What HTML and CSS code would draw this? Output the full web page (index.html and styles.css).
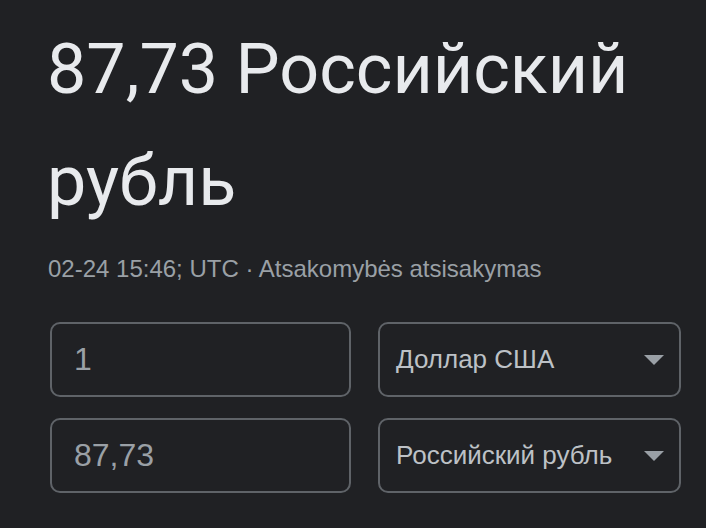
FILE: index.html
```html
<!DOCTYPE html>
<html lang="ru">
<head>
<meta charset="utf-8">
<link rel="stylesheet" href="styles.css">
</head>
<body>
<div class="panel">
  <div class="result">87,73 Российский рубль</div>
  <div class="meta">02-24 15:46; UTC · <span class="link">Atsakomybės atsisakymas</span></div>
  <div class="grid">
    <div class="field"><span class="val">1</span></div>
    <div class="select"><span class="cur">Доллар США</span><span class="arrow"></span></div>
    <div class="field"><span class="val">87,73</span></div>
    <div class="select"><span class="cur">Российский рубль</span><span class="arrow"></span></div>
  </div>
</div>
</body>
</html>
```

FILE: styles.css
```css
html, body {
  margin: 0;
  padding: 0;
  background: #202124;
}
body {
  width: 706px;
  height: 528px;
  overflow: hidden;
}
.panel {
  padding: 13px 0 0 46px;
}
.result {
  margin-left: 1px;
  font-family: Roboto, "Noto Sans", sans-serif;
  font-size: 70px;
  line-height: 112px;
  color: #e8eaed;
  width: 600px;
}
.meta {
  margin-top: 16px;
  margin-left: 2px;
  font-family: "Liberation Sans", Arial, sans-serif;
  font-size: 24px;
  line-height: 32px;
  color: #9aa0a6;
}
.grid {
  margin-top: 37px;
  margin-left: 4px;
  display: grid;
  grid-template-columns: 301px 303px;
  grid-auto-rows: 75px;
  column-gap: 27px;
  row-gap: 21px;
}
.field, .select {
  box-sizing: border-box;
  border: 2px solid #5f6368;
  border-radius: 10px;
  display: flex;
  align-items: center;
  font-family: "Liberation Sans", Arial, sans-serif;
}
.field {
  padding-left: 22px;
  font-size: 32px;
  color: #9aa0a6;
}
.select {
  padding: 0 15px 0 16px;
  justify-content: space-between;
  font-size: 26px;
  color: #bdc1c6;
}
.arrow {
  width: 0;
  height: 0;
  border-left: 10px solid transparent;
  border-right: 10px solid transparent;
  border-top: 10px solid #9aa0a6;
}
```
